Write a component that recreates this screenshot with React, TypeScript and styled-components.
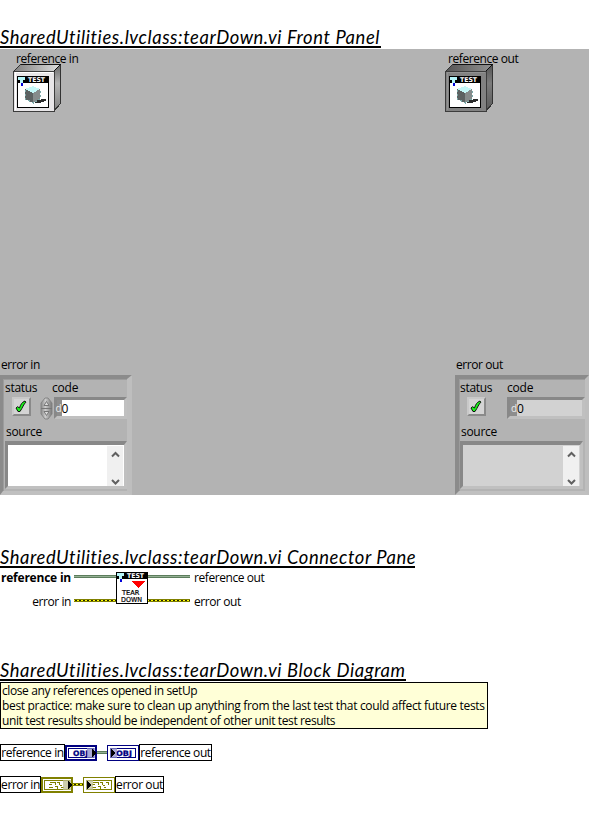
import React from 'react';
import styled, { createGlobalStyle } from 'styled-components';

const Global = createGlobalStyle`
  html, body { margin: 0; padding: 0; background: #fff; }
  body { width: 589px; height: 818px; overflow: hidden; color: #000;
    font: 12px/15px "Open Sans", "Noto Sans", sans-serif; }
  svg { display: block; flex: none; }
`;

const Page = styled.main`
  display: flex;
  flex-direction: column;
  align-items: flex-start;
  width: 589px;
  height: 818px;
`;

const Heading = styled.h1<{ $top: number; $gap: number; $width: number }>`
  box-sizing: border-box;
  width: ${p => p.$width}px;
  margin: ${p => p.$top}px 0 ${p => p.$gap}px;
  height: 20px;
  border-bottom: 2px solid #000;
  font: italic 400 18.4px/19px Lato, sans-serif;
  letter-spacing: 0.58px;
  white-space: nowrap;
`;

const Label = styled.span<{ $track?: number; $bold?: boolean }>`
  white-space: nowrap;
  font-weight: ${p => (p.$bold ? 700 : 400)};
  letter-spacing: ${p => p.$track ?? -0.42}px;
`;

const FrontPanel = styled.section`
  display: flex;
  flex-direction: column;
  justify-content: space-between;
  width: 589px;
  height: 446px;
  background: #b3b3b3;
`;

const Row = styled.div`
  display: flex;
  justify-content: space-between;
`;

const ObjectControl = styled.div<{ $left: number }>`
  display: flex;
  flex-direction: column;
  box-sizing: border-box;
  width: ${p => p.$left + 144}px;
  padding: 2px 0 0 ${p => p.$left}px;
  span { margin-left: 3px; height: 13px; line-height: 15px; }
`;

const ErrorControl = styled.div<{ $width: number }>`
  width: ${p => p.$width}px;
  > span { display: block; margin-left: 1px; height: 18px; }
`;

const Cluster = styled.div<{ $out?: boolean }>`
  box-sizing: border-box;
  height: 120px;
  border: solid;
  border-width: 4px ${p => (p.$out ? 4 : 5)}px 4px ${p => (p.$out ? 4 : 3)}px;
  border-color: #8b8b8b #bebebe #c0c0c0 #8b8b8b;
  box-shadow: inset 1px 1px #9c9c9c;
  padding: 1px 0 0 ${p => (p.$out ? 1 : 2)}px;
`;

const CaptionRow = styled.div`
  display: grid;
  grid-template-columns: 47px 1fr;
  height: 17px;
`;

const ControlRow = styled.div`
  display: flex;
  height: 22px;
  padding-left: 7px;
`;

const Indicator = styled.div`
  box-sizing: border-box;
  width: 19px;
  height: 19px;
  border: 2px solid;
  border-color: #c9c9c9 #8a8a8a #8a8a8a #c9c9c9;
  background: #d4d4d4;
`;

const SpinnerSlot = styled.div<{ $width: number }>`
  width: ${p => p.$width}px;
  padding-left: 9px;
  box-sizing: border-box;
`;

const Numeric = styled.div<{ $out?: boolean }>`
  box-sizing: border-box;
  display: flex;
  width: ${p => (p.$out ? 78 : 76)}px;
  height: 22px;
  border: 3px solid;
  border-color: #888 #c0c0c0 #c0c0c0 #888;
  background: ${p => (p.$out ? '#d2d2d2' : '#fff')};
  line-height: 17px;
`;

const Radix = styled.span<{ $width: number }>`
  width: ${p => p.$width}px;
  background: #8e8e8e;
  color: #ececec;
  font-size: 10px;
  line-height: 17px;
  text-align: right;
  direction: rtl;
`;

const SourceCaption = styled.div`
  height: 22px;
  padding: 5px 0 0 1px;
  box-sizing: border-box;
`;

const TextArea = styled.div<{ $out?: boolean }>`
  box-sizing: border-box;
  display: flex;
  justify-content: flex-end;
  width: ${p => (p.$out ? 123 : 122)}px;
  height: 48px;
  border: solid;
  border-width: 4px 3px 3px 3px;
  border-color: #888 #c0c0c0 #c0c0c0 #888;
  background: ${p => (p.$out ? '#d2d2d2' : '#fff')};
`;

const ScrollBar = styled.div`
  display: flex;
  flex-direction: column;
  justify-content: space-between;
  align-items: center;
  box-sizing: border-box;
  width: 16px;
  height: 40px;
  margin: 1px 1px 0 0;
  padding: 5px 0 0;
  background: #f0f0f0;
`;

const ConnectorPane = styled.section`
  display: grid;
  grid-template-columns: 71px 45px 32px 46px auto;
  grid-template-rows: 8px 24px;
  padding-top: 2px;
  height: 32px;
`;

const PaneName = styled.div<{ $end?: boolean; $dy: number }>`
  display: flex;
  justify-content: ${p => (p.$end ? 'flex-end' : 'flex-start')};
  height: 15px;
  margin-top: ${p => p.$dy}px;
`;

const PaneIcon = styled.div`
  grid-column: 3;
  grid-row: 1 / 3;
`;

const PaneWire = styled.div<{ $end?: boolean; $error?: boolean }>`
  display: flex;
  justify-content: ${p => (p.$end ? 'flex-end' : 'flex-start')};
  padding-top: ${p => (p.$error ? 19 : 3)}px;
`;

const Comment = styled.p`
  box-sizing: border-box;
  width: 488px;
  height: 47px;
  margin: 0 0 15px;
  padding: 0 0 0 1px;
  border: 1px solid #000;
  background: #ffffd7;
  span { display: block; }
`;

const Flow = styled.div`
  display: flex;
  align-items: center;
  height: 17px;
  margin-bottom: 15px;
`;

const NameBox = styled.div<{ $width: number }>`
  box-sizing: border-box;
  display: flex;
  justify-content: center;
  width: ${p => p.$width}px;
  height: 17px;
  border: 1px solid #000;
  line-height: 16px;
`;

const Wire = ({ width, error }: { width: number; error?: boolean }) => (
  <svg width={width} height="3" shapeRendering="crispEdges">
    <rect width={width} height="3" fill={error ? '#808000' : '#5c7d5c'} />
    {error ? (
      <>
        <path d={`M0 1.5H${width}`} stroke="#ffff00" />
        <path d={`M1 1.5H${width}`} stroke="#222200" strokeDasharray="2 2" />
      </>
    ) : (
      <path d={`M0 1.5H${width}`} stroke="#94b094" />
    )}
  </svg>
);

const IconHeader = () => (
  <>
    <rect x=".5" y=".5" width="31" height="31" fill="#fff" stroke="#000" />
    <path d="M1 1h31v6H1z" fill="#000" />
    <path d="M1 1h7v3H6v3H3V4H1z" fill="#b6f6fa" />
    <path d="M4 7h2v3H4z" fill="#0000d8" />
    <text x="11" y="6" fontFamily="DejaVu Sans" fontWeight="700" fontSize="6.600" textLength="17"
      lengthAdjust="spacingAndGlyphs" fill="#fff">TEST</text>
  </>
);

const ObjectBox = ({ dark }: { dark?: boolean }) => {
  const id = dark ? 'boxOut' : 'boxIn';
  return (
    <svg width="48" height="48" shapeRendering="crispEdges">
      <defs>
        <linearGradient id={id} x1="0" y1="0" x2="0" y2="1">
          <stop offset="0" stopColor={dark ? '#555' : '#666'} />
          <stop offset=".4" stopColor={dark ? '#7c7c7c' : '#b4b4b4'} />
          <stop offset="1" stopColor={dark ? '#5a5a5a' : '#808080'} />
        </linearGradient>
        <linearGradient id={`${id}Top`}>
          <stop offset="0" stopColor={dark ? '#555' : '#808080'} />
          <stop offset="1" stopColor={dark ? '#909090' : '#dcdcdc'} />
        </linearGradient>
      </defs>
      <path d="M.5 7.5l7-7h40v39l-7 8z" fill={`url(#${id})`} stroke="#333" />
      <path d="M1 7l7-6h38l-6 6z" fill={`url(#${id}Top)`} />
      <path d="M8 .5h39.5l-7 7" fill="none" stroke="#111" />
      <rect x=".5" y="7.5" width="41" height="39.500" fill={dark ? '#828282' : '#e8e6e8'} stroke="#3c3c3c" />
      <path d="M2 45.500V8.500H40" fill="none" stroke={dark ? '#929292' : '#fff'} />
      <g transform="translate(4 12)">
        <IconHeader />
        <path d="M18 26l3-2h2l1-1h5v2h-2v1h-3v1h-6z" fill="#2a2a2a" />
        <path d="M8 13l8 4v10l-8-4z" fill="#5c6262" />
        <path d="M16 17l7-4v10l-7 4z" fill="#858b8b" />
        <path d="M8 13l8-3 7 3-7 4z" fill="#c4f8f8" />
        <path d="M8.500 14v9l8 4 6.500-4V13" fill="none" stroke="#7aa8a8" strokeDasharray="2 2" />
      </g>
    </svg>
  );
};

const TearDownIcon = () => (
  <svg width="32" height="32" shapeRendering="crispEdges">
    <IconHeader />
    <path d="M16 9h13l-6 7h-1z" fill="#f00" />
    <g fontFamily="DejaVu Sans" fontSize="6.800" fill="#000" stroke="#000" strokeWidth=".2">
      <text x="6" y="23" textLength="17.500" lengthAdjust="spacingAndGlyphs">TEAR</text>
      <text x="5" y="30" textLength="21" lengthAdjust="spacingAndGlyphs">DOWN</text>
    </g>
  </svg>
);

const Check = () => (
  <svg width="15" height="15">
    <path d="M2 9l1.500-1.300L5.500 9C6.500 5.500 8 3.200 11 2l.8 1.200C9.500 5.500 9 8 6 12.500H4z" fill="#1bf01b" stroke="#000" strokeWidth=".9" />
  </svg>
);

const Spinner = () => (
  <svg width="13" height="23">
    <defs>
      <linearGradient id="spin">
        <stop stopColor="#888" />
        <stop offset=".4" stopColor="#ccc" />
        <stop offset="1" stopColor="#777" />
      </linearGradient>
    </defs>
    <path d="M1 6l4-5h3l4 5v11l-4 5H5l-4-5z" fill="url(#spin)" stroke="#858585" />
    <path d="M1 11.500h11" stroke="#777" />
    <path d="M4 8.500l2.500-4L9 8.500zM4 14.500h5L6.500 18.500z" fill="#ddd" stroke="#777" />
  </svg>
);

const Chevron = ({ down }: { down?: boolean }) => (
  <svg width="9" height="7">
    <path d={down ? 'M1 1l3.500 3.500L8 1' : 'M1 5.500L4.500 2 8 5.500'} fill="none" stroke="#606060" strokeWidth="2" />
  </svg>
);

const Terminal = ({ kind, out }: { kind: 'obj' | 'error'; out?: boolean }) => {
  const obj = kind === 'obj';
  const color = obj ? '#000080' : '#808000';
  const tint = obj ? '#8c8cc8' : '#bcbc90';
  const edge = out ? 1 : 2;
  return (
    <svg width="32" height="16" shapeRendering="crispEdges">
      <rect width="32" height="16" fill={color} />
      <rect x={edge} y={edge} width={32 - edge * 2} height={16 - edge * 2} fill="#fff" />
      <rect x="3.500" y="3.500" width="25" height="9" fill="#fff" stroke={color} />
      {obj ? (
        <text x={out ? 9 : 8} y="11" fontFamily="DejaVu Sans" fontWeight="700" fontSize="7.500"
          textLength={out ? 16 : 15} lengthAdjust="spacingAndGlyphs" fill={color}
          stroke={color} strokeWidth=".3">OBJ</text>
      ) : (
        <path d={out
          ? 'M10 5.500h5v2M9 7.500h3M9 10.500h4M15 9.500h2v2M17 5.500h2v2M20 8.500h2M23 5.500h2v2M21 10.500h2'
          : 'M9 5.500h5v2M8 7.500h3M8 10.500h4M14 9.500h2v2M16 5.500h2v2M19 8.500h2M20 10.500h3'}
          fill="none" stroke={color} />
      )}
      <rect x={out ? 3 : 22} y="3" width={out ? 7 : 8} height="10" fill={tint} fillOpacity=".75" />
      <path d={out ? 'M4 4l4 4-4 4z' : 'M27 4l4 4-4 4z'} fill="#000" />
    </svg>
  );
};

const ErrorCluster = ({ out }: { out?: boolean }) => (
  <ErrorControl $width={out ? 134 : 132}>
    <Label>{out ? 'error out' : 'error in'}</Label>
    <Cluster $out={out}>
      <CaptionRow>
        <Label $track={-0.3}>status</Label>
        <Label $track={-0.2}>code</Label>
      </CaptionRow>
      <ControlRow>
        <Indicator><Check /></Indicator>
        <SpinnerSlot $width={out ? 21 : 23}>{!out && <Spinner />}</SpinnerSlot>
        <Numeric $out={out}>
          <Radix $width={out ? 7 : 5}>d</Radix>
          <Label>0</Label>
        </Numeric>
      </ControlRow>
      <SourceCaption><Label $track={-0.3}>source</Label></SourceCaption>
      <TextArea $out={out}>
        <ScrollBar>
          <Chevron />
          <Chevron down />
        </ScrollBar>
      </TextArea>
    </Cluster>
  </ErrorControl>
);

export default function App() {
  return (
    <Page>
      <Global />
      <Heading $top={28} $gap={1} $width={381}>SharedUtilities.lvclass:tearDown.vi Front Panel</Heading>
      <FrontPanel>
        <Row>
          <ObjectControl $left={13}>
            <Label>reference in</Label>
            <ObjectBox />
          </ObjectControl>
          <ObjectControl $left={0}>
            <Label>reference out</Label>
            <ObjectBox dark />
          </ObjectControl>
        </Row>
        <Row>
          <ErrorCluster />
          <ErrorCluster out />
        </Row>
      </FrontPanel>

      <Heading $top={53} $gap={2} $width={415}>SharedUtilities.lvclass:tearDown.vi Connector Pane</Heading>
      <ConnectorPane>
        <PaneName $end $dy={-2}><Label $bold $track={-0.22}>reference in</Label></PaneName>
        <PaneWire $end><Wire width={42} /></PaneWire>
        <PaneIcon><TearDownIcon /></PaneIcon>
        <PaneWire><Wire width={42} /></PaneWire>
        <PaneName $dy={-2}><Label>reference out</Label></PaneName>
        <PaneName $end $dy={14}><Label>error in</Label></PaneName>
        <PaneWire $end $error><Wire width={42} error /></PaneWire>
        <PaneWire $error><Wire width={42} error /></PaneWire>
        <PaneName $dy={14}><Label>error out</Label></PaneName>
      </ConnectorPane>

      <Heading $top={57} $gap={1} $width={406}>SharedUtilities.lvclass:tearDown.vi Block Diagram</Heading>
      <Comment>
        <Label $track={-0.4}>close any references opened in setUp</Label>
        <Label $track={-0.33}>best practice: make sure to clean up anything from the last test that could affect future tests</Label>
        <Label $track={-0.38}>unit test results should be independent of other unit test results</Label>
      </Comment>
      <Flow>
        <NameBox $width={65}><Label>reference in</Label></NameBox>
        <Terminal kind="obj" />
        <Wire width={10} />
        <Terminal kind="obj" out />
        <NameBox $width={73}><Label>reference out</Label></NameBox>
      </Flow>
      <Flow>
        <NameBox $width={41}><Label>error in</Label></NameBox>
        <Terminal kind="error" />
        <Wire width={10} error />
        <Terminal kind="error" out />
        <NameBox $width={49}><Label>error out</Label></NameBox>
      </Flow>
    </Page>
  );
}
